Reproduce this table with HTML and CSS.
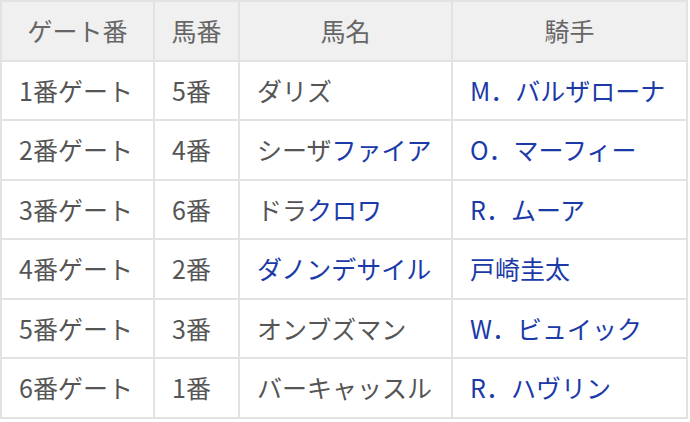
FILE: index.html
```html
<!DOCTYPE html>
<html lang="ja">
<head>
<meta charset="utf-8">
<link rel="stylesheet" href="styles.css">
</head>
<body>
<table class="race">
  <colgroup>
    <col class="c1"><col class="c2"><col class="c3"><col class="c4">
  </colgroup>
  <thead>
    <tr><th>ゲート番</th><th>馬番</th><th>馬名</th><th>騎手</th></tr>
  </thead>
  <tbody>
    <tr><td>1番ゲート</td><td>5番</td><td>ダリズ</td><td><span class="link">M．バルザローナ</span></td></tr>
    <tr><td>2番ゲート</td><td>4番</td><td>シーザ<span class="link">ファイア</span></td><td><span class="link">O．マーフィー</span></td></tr>
    <tr><td>3番ゲート</td><td>6番</td><td>ドラ<span class="link">クロワ</span></td><td><span class="link">R．ムーア</span></td></tr>
    <tr><td>4番ゲート</td><td>2番</td><td><span class="link">ダノンデサイル</span></td><td><span class="link">戸崎圭太</span></td></tr>
    <tr><td>5番ゲート</td><td>3番</td><td>オンブズマン</td><td><span class="link">W．ビュイック</span></td></tr>
    <tr><td>6番ゲート</td><td>1番</td><td>バーキャッスル</td><td><span class="link">R．ハヴリン</span></td></tr>
  </tbody>
</table>
</body>
</html>
```

FILE: styles.css
```css
html, body {
  margin: 0;
  padding: 0;
  background: #fff;
}
body {
  font-family: "Noto Sans CJK JP", "Noto Sans", sans-serif;
  font-size: 25px;
  color: #555;
}
.race {
  border-collapse: collapse;
  table-layout: fixed;
  width: 688px;
}
.c1 { width: 153px; }
.c2 { width: 85px; }
.c3 { width: 213px; }
.c4 { width: 235px; }
.race th,
.race td {
  border: 2px solid #e2e2e2;
  height: 57.5px;
  padding: 0 0 0 17px;
  line-height: 1;
  white-space: nowrap;
  font-weight: 400;
  text-align: left;
  vertical-align: middle;
}
.race th {
  background: #f0f0f0;
  color: #666;
  text-align: center;
  padding: 0;
}
.link {
  color: #1b3aa8;
}
```
